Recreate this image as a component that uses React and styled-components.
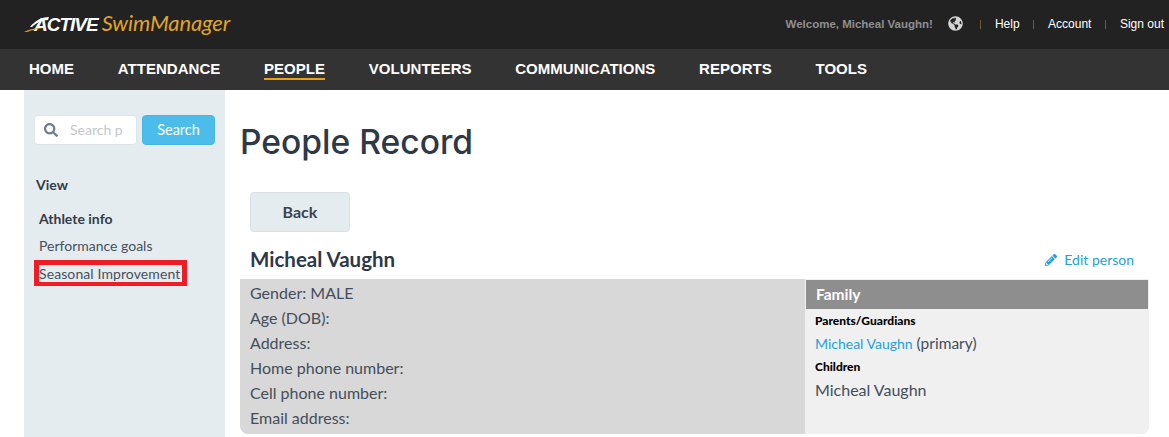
import React from 'react'
import styled, { createGlobalStyle } from 'styled-components'
import { FaGlobeAmericas, FaPencilAlt, FaSearch } from 'react-icons/fa'

const GlobalStyle = createGlobalStyle`
  html, body {
    margin: 0;
    padding: 0;
    background: #fff;
    font-family: Lato, "Liberation Sans", sans-serif;
    color: #3a4452;
  }
  * { box-sizing: border-box; }
`

const Page = styled.div`
  width: 1169px;
  height: 437px;
  overflow: hidden;
`

const TopBar = styled.header`
  height: 49px;
  background: #222222;
  display: flex;
  align-items: center;
  justify-content: space-between;
  padding: 0 5px 2px 24px;
`

const Logo = styled.div`
  position: relative;
  display: flex;
  align-items: baseline;
  font-style: italic;
  line-height: 24px;
  white-space: nowrap;
  padding-left: 10px;
`

const LogoActive = styled.span`
  color: #fff;
  font-family: "Liberation Sans", sans-serif;
  font-weight: 700;
  font-size: 19px;
  letter-spacing: -1px;
  margin-right: 4px;
`

const LogoSwim = styled.span`
  color: #e0a52a;
  font-family: Lato, sans-serif;
  font-weight: 400;
  font-size: 21.9px;
  letter-spacing: -0.1px;
`

const Swoosh = styled.svg`
  position: absolute;
  left: 0;
  top: 3px;
  width: 30px;
  height: 20px;
`

const UserNav = styled.div`
  display: flex;
  align-items: center;
  font-family: "Liberation Sans", sans-serif;
  font-size: 12px;
  color: #fff;
`

const Welcome = styled.span`
  color: #8f8f8f;
  font-weight: 700;
  font-size: 11.5px;
  margin-right: 15px;
`

const Globe = styled(FaGlobeAmericas)`
  color: #d4d4d4;
  font-size: 15px;
  margin-right: 17px;
`

const UserLink = styled.a`
  padding-left: 15px;
  margin-left: ${p => (p.$first ? '0' : '13.5px')};
  position: relative;
  &::before {
    content: '';
    position: absolute;
    left: 0;
    top: 3px;
    width: 1px;
    height: 9px;
    background: #6d5f35;
  }
`

const MainNav = styled.nav`
  height: 41px;
  background: #333333;
  display: flex;
  align-items: center;
  gap: 43.7px;
  padding-left: 29px;
`

const NavItem = styled.a`
  font-family: "Liberation Sans", sans-serif;
  font-weight: 700;
  font-size: 15px;
  line-height: 19px;
  letter-spacing: 0.03px;
  color: #fff;
  border-bottom: 2px solid ${p => (p.$active ? '#e8a11c' : 'transparent')};
`

const Body = styled.div`
  display: flex;
  height: 347px;
  padding-left: 24px;
`

const Sidebar = styled.aside`
  width: 201px;
  flex: none;
  background: #e5ecf0;
  padding: 25px 10px 0;
`

const SearchRow = styled.div`
  display: flex;
  gap: 5px;
  height: 30px;
`

const SearchBox = styled.div`
  width: 103px;
  background: #fff;
  border: 1px solid #dde4e8;
  border-radius: 4px;
  display: flex;
  align-items: center;
  padding-left: 9px;
  overflow: hidden;
  color: #6d7f8c;
`

const SearchInput = styled.input`
  width: 53px;
  margin: 0 0 2px 12px;
  padding: 0;
  border: 0;
  outline: 0;
  background: transparent;
  font: 400 14px Lato, sans-serif;
  &::placeholder {
    color: #c4c8cb;
    opacity: 1;
  }
`

const SearchButton = styled.button`
  width: 73px;
  border: 1px solid #47b6e2;
  border-radius: 4px;
  background: #4cbdea;
  color: #fff;
  font: 400 14.5px Lato, sans-serif;
  padding: 0 0 2px;
`

const ViewTitle = styled.div`
  margin: 31px 0 0 2px;
  font-weight: 700;
  font-size: 14px;
  line-height: 17px;
  color: #333c48;
`

const SideList = styled.ul`
  list-style: none;
  margin: 12px 0 0;
  padding: 0;
`

const SideItem = styled.li`
  height: 27px;
  padding: 5px 0 0 5px;
  font-size: 14px;
  line-height: 17px;
  font-weight: ${p => (p.$bold ? 700 : 400)};
  color: ${p => (p.$bold ? '#333c48' : '#46505c')};
  white-space: nowrap;
`

const MarkedItem = styled.li`
  width: 153px;
  height: 26px;
  margin-top: 1px;
  border: 5px solid #ee1c25;
  border-bottom-width: 4px;
  font-size: 14px;
  line-height: 17px;
  letter-spacing: 0.1px;
  color: #46505c;
  white-space: nowrap;
`

const Main = styled.main`
  flex: 1;
  padding: 0 20px 0 15px;
`

const Title = styled.h1`
  margin: 30px 0 0;
  font-family: Inter, Lato, sans-serif;
  font-size: 33.6px;
  line-height: 44px;
  font-weight: 500;
  color: #2f3846;
`

const BackButton = styled.button`
  display: block;
  width: 100px;
  height: 40px;
  margin: 28px 0 0 10px;
  background: #e5ecf0;
  border: 1px solid #d8e1e6;
  border-radius: 4px;
  font: 700 16px Lato, sans-serif;
  padding: 0 0 2px;
  color: #39434f;
`

const NameRow = styled.div`
  display: flex;
  justify-content: space-between;
  align-items: center;
  height: 47px;
  padding: 6px 15px 0 10px;
`

const PersonName = styled.h2`
  margin: 0;
  font-size: 20.5px;
  font-weight: 700;
  color: #2f3846;
`

const EditLink = styled.a`
  display: flex;
  align-items: center;
  gap: 7px;
  margin-top: 2px;
  font-size: 14px;
  color: #22a1dc;
`

const Panel = styled.section`
  display: flex;
  height: 155px;
  background: #d8d8d8;
  border-radius: 0 0 8px 8px;
  overflow: hidden;
`

const Details = styled.div`
  flex: 1;
  padding: 1px 10px;
`

const DetailRow = styled.div`
  font-size: 16px;
  line-height: 25px;
  color: #444e5a;
`

const Family = styled.div`
  width: 344px;
  background: #f0f0f0;
`

const FamilyHead = styled.div`
  height: 29px;
  margin: 1px 1px 0 1px;
  padding-left: 10px;
  background: #8e8e8e;
  color: #fff;
  font-weight: 700;
  font-size: 15.5px;
  line-height: 29px;
`

const FamilyLabel = styled.div`
  margin: ${p => p.$top} 0 0 10px;
  font-size: 12px;
  line-height: 14px;
  font-weight: 900;
  color: #000;
`

const FamilyText = styled.div`
  margin: ${p => p.$top} 0 0 10px;
  font-size: ${p => p.$size};
  line-height: 20px;
  color: #444e5a;
`

const FamilyLink = styled.a`
  color: #22a1dc;
  font-size: 14px;
`

export default function App() {
  return (
    <Page>
      <GlobalStyle />
      <TopBar>
        <Logo>
          <Swoosh viewBox="0 0 30 20">
            <path d="M6 13 C11 7 17 3 25 3 L24 6 C18 6 12 9 8 13 Z" fill="#fff" />
            <path d="M0 18 C6 15 14 13 23 14 C15 14 8 16 3 18 Z" fill="#e0a52a" />
          </Swoosh>
          <LogoActive>ACTIVE</LogoActive>
          <LogoSwim>SwimManager</LogoSwim>
        </Logo>
        <UserNav>
          <Welcome>Welcome, Micheal Vaughn!</Welcome>
          <Globe />
          <UserLink $first>Help</UserLink>
          <UserLink>Account</UserLink>
          <UserLink>Sign out</UserLink>
        </UserNav>
      </TopBar>
      <MainNav>
        <NavItem>HOME</NavItem>
        <NavItem>ATTENDANCE</NavItem>
        <NavItem $active>PEOPLE</NavItem>
        <NavItem>VOLUNTEERS</NavItem>
        <NavItem>COMMUNICATIONS</NavItem>
        <NavItem>REPORTS</NavItem>
        <NavItem>TOOLS</NavItem>
      </MainNav>
      <Body>
        <Sidebar>
          <SearchRow>
            <SearchBox>
              <FaSearch size={14} />
              <SearchInput placeholder="Search people" />
            </SearchBox>
            <SearchButton>Search</SearchButton>
          </SearchRow>
          <ViewTitle>View</ViewTitle>
          <SideList>
            <SideItem $bold>Athlete info</SideItem>
            <SideItem>Performance goals</SideItem>
            <MarkedItem>Seasonal Improvement</MarkedItem>
          </SideList>
        </Sidebar>
        <Main>
          <Title>People Record</Title>
          <BackButton>Back</BackButton>
          <NameRow>
            <PersonName>Micheal Vaughn</PersonName>
            <EditLink><FaPencilAlt size={12} />Edit person</EditLink>
          </NameRow>
          <Panel>
            <Details>
              <DetailRow>Gender: MALE</DetailRow>
              <DetailRow>Age (DOB):</DetailRow>
              <DetailRow>Address:</DetailRow>
              <DetailRow>Home phone number:</DetailRow>
              <DetailRow>Cell phone number:</DetailRow>
              <DetailRow>Email address:</DetailRow>
            </Details>
            <Family>
              <FamilyHead>Family</FamilyHead>
              <FamilyLabel $top="5px">Parents/Guardians</FamilyLabel>
              <FamilyText $top="5px" $size="15.5px"><FamilyLink>Micheal Vaughn</FamilyLink> (primary)</FamilyText>
              <FamilyLabel $top="6px">Children</FamilyLabel>
              <FamilyText $top="6px" $size="16px">Micheal Vaughn</FamilyText>
            </Family>
          </Panel>
        </Main>
      </Body>
    </Page>
  )
}
